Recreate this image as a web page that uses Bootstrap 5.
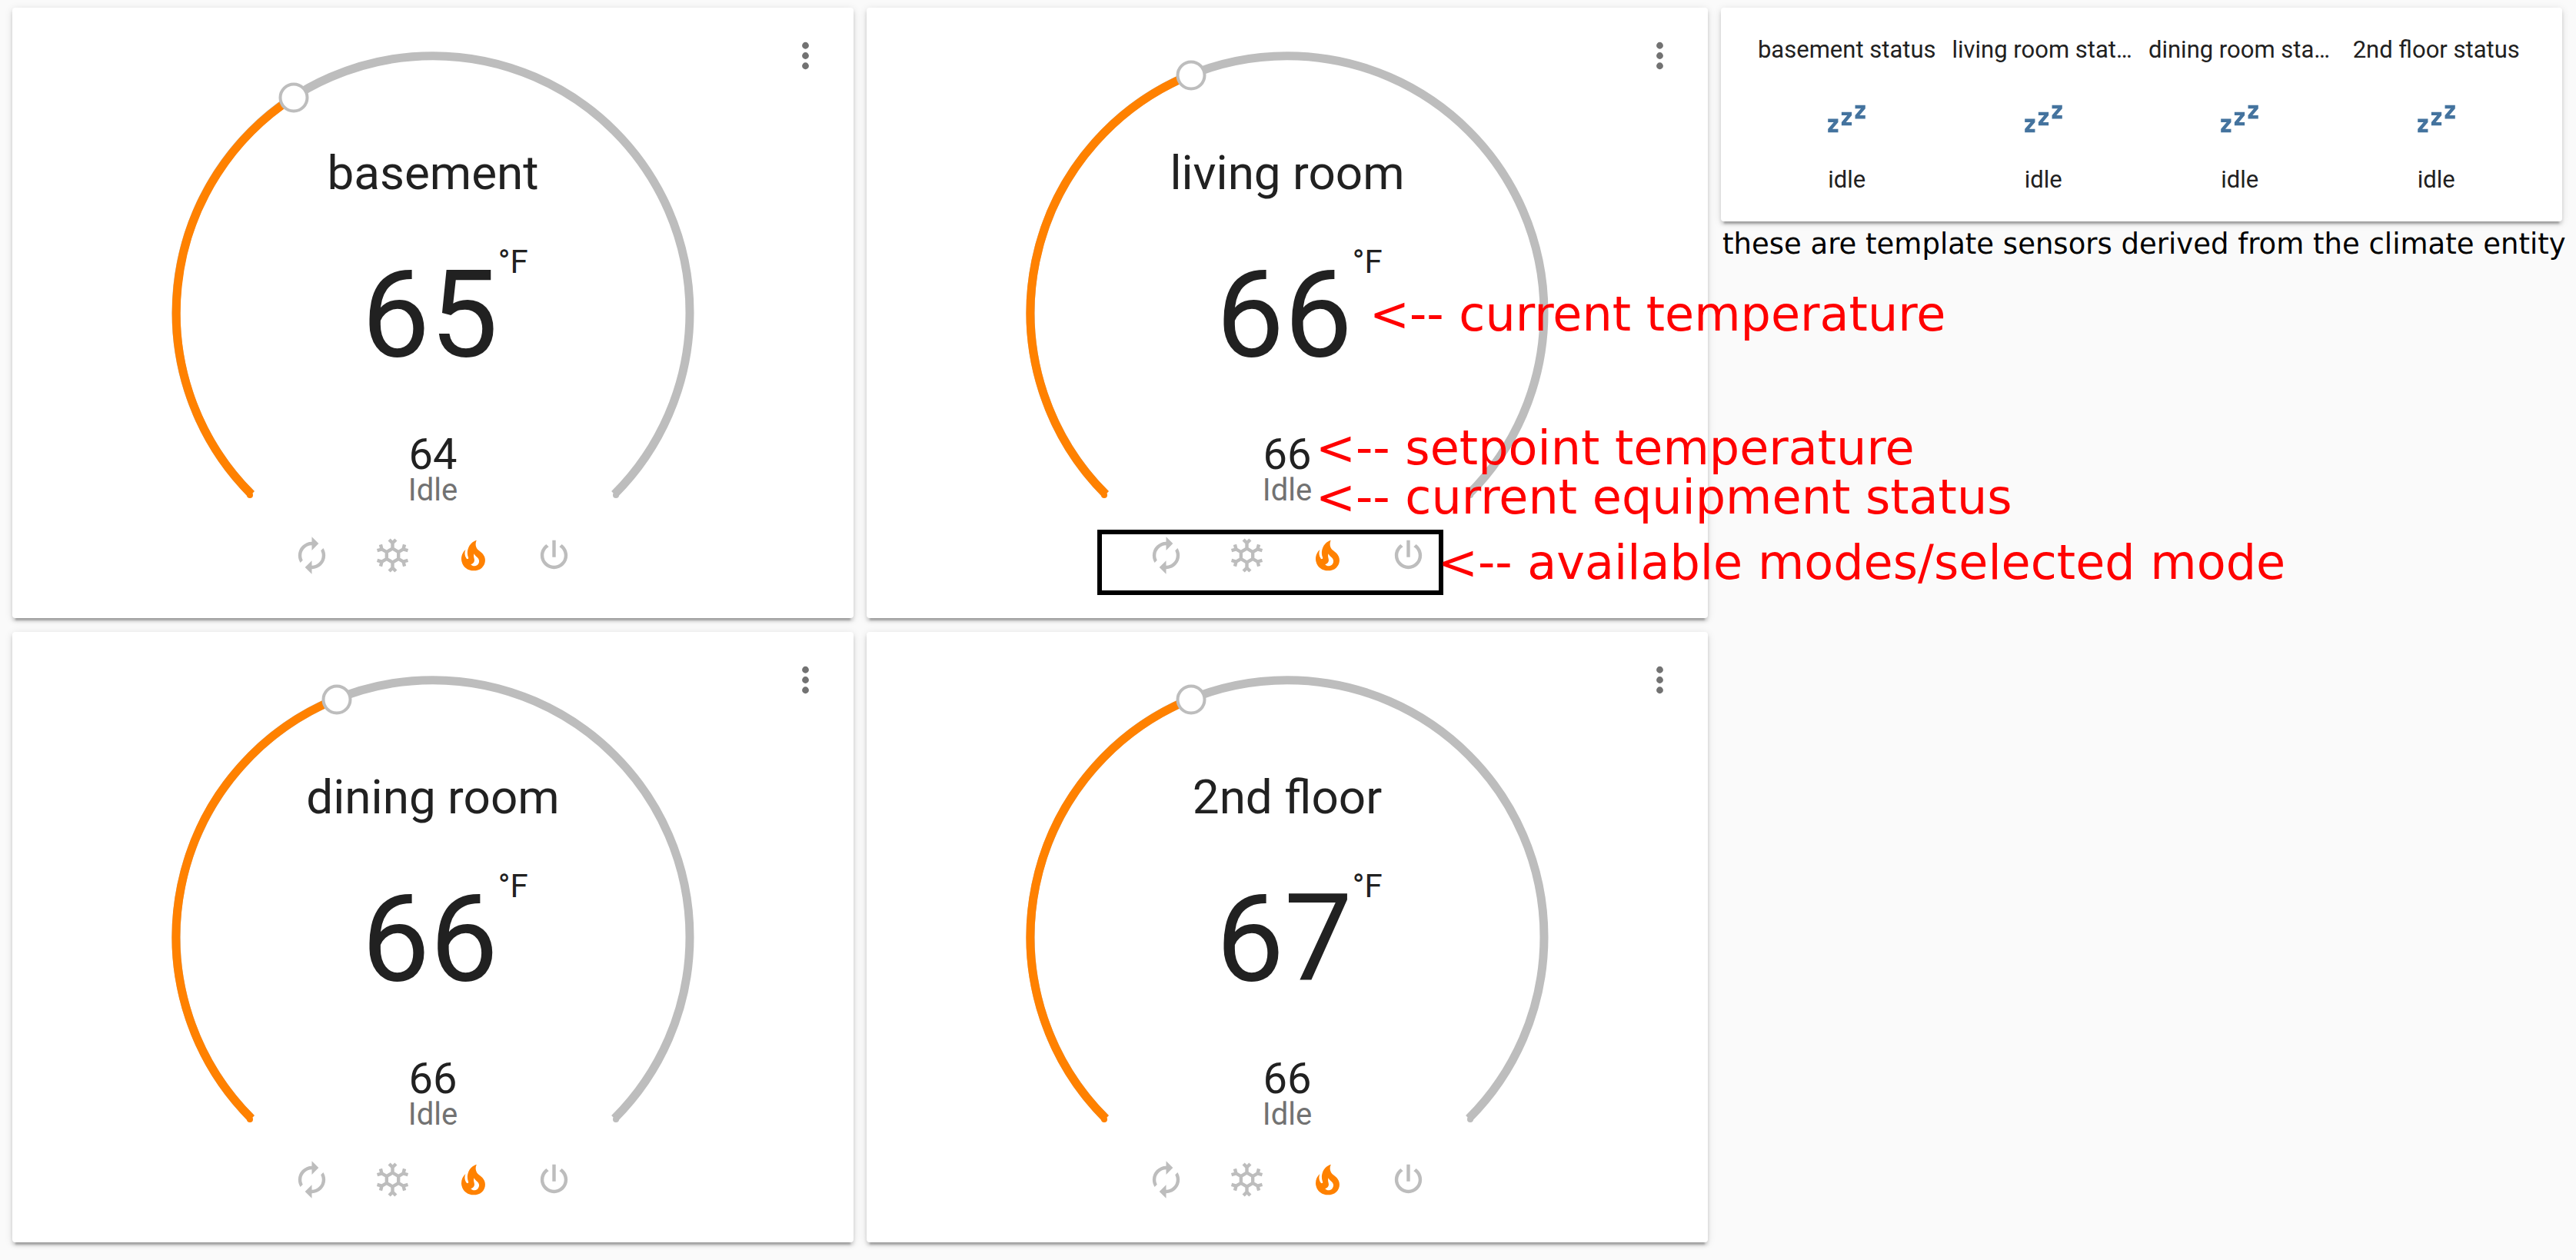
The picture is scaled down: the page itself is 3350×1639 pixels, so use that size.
<!DOCTYPE html>
<html lang="en">
<head>
<meta charset="utf-8">
<meta name="viewport" content="width=device-width, initial-scale=1">
<title>Thermostats</title>
<link href="https://cdn.jsdelivr.net/npm/bootstrap@5.3.0/dist/css/bootstrap.min.css" rel="stylesheet">
<style>
  body { background: #fafafa; color: #212121; font-family: Roboto, sans-serif; overflow-x: hidden; }
  .dashboard { padding: 10px 18px 10px 16px; }
  .dashboard > .row { --bs-gutter-x: 17px; }
  .stack { gap: 18px; }
  .panel { border: 0; border-radius: 4px; color: inherit; box-shadow: 0 4px 4px rgba(0,0,0,.14), 0 2px 11px rgba(0,0,0,.12), 0 7px 2px -4px rgba(0,0,0,.2); }
  .thermostat { padding: 57px 0 55px; }
  .icon { width: 53px; height: 53px; fill: currentColor; display: block; }
  .icon-btn { border: 0; padding: 0; background: none; color: #bdbdbd; }
  .icon-btn.heat { color: #ff8100; }
  .menu-btn { position: absolute; top: 36px; right: 36px; color: #727272; }
  .dial { display: grid; justify-content: center; grid-template-columns: 680px; }
  .dial > * { grid-area: 1 / 1; }
  .dial svg { width: 680px; height: 590px; overflow: visible; fill: none; stroke-width: 11px; }
  .track { stroke: #bdbdbd; }
  .level { stroke: #ff8100; }
  .track-tip { fill: #bdbdbd; }
  .level-tip { fill: #ff8100; }
  .knob { fill: #fff; stroke: #bdbdbd; stroke-width: 4px; }
  .readout { padding-top: 122px; }
  .room { font-size: 62px; line-height: 72px; font-weight: 400; margin-bottom: 56px; }
  .current { font-size: 158px; line-height: 184px; margin-bottom: 66px; padding-right: 8px; }
  .unit { position: absolute; left: 100%; top: 3px; margin-left: -8px; font-size: 42px; line-height: 42px; }
  .setpoint { font-size: 56px; line-height: 48px; }
  .action { font-size: 40px; line-height: 46px; color: #727272; }
  .modes { gap: 52px; margin-top: 35px; }
  .glance { padding: 37px 36px 36px; font-size: 31px; line-height: 36px; }
  .glance .col { padding: 0 9px; min-width: 0; }
  .glance .icon { color: #44739e; margin: 45px auto 35px; }
  .caption, .note { font-family: "DejaVu Sans", sans-serif; white-space: nowrap; }
  .caption { color: #000; font-size: 37px; line-height: 44px; margin: -10px 0 0 2px; }
  .note { position: absolute; z-index: 2; color: #f00; font-size: 62px; line-height: 72px; }
  .note-current { left: calc(50% + 107px); top: 363px; }
  .note-setpoint { left: calc(50% + 37px); top: 537px; }
  .note-action { left: calc(50% + 37px); top: 601px; }
  .note-modes { left: calc(50% + 196px); top: 686px; }
  .frame { position: absolute; left: calc(50% - 247px); top: 679px; width: 450px; height: 85px; border: 6px solid #000; pointer-events: none; }
</style>
</head>
<body>
<svg class="d-none" aria-hidden="true">
  <symbol id="i-dots" viewBox="0 0 24 24"><path d="M12,16A2,2 0 0,1 14,18A2,2 0 0,1 12,20A2,2 0 0,1 10,18A2,2 0 0,1 12,16M12,10A2,2 0 0,1 14,12A2,2 0 0,1 12,14A2,2 0 0,1 10,12A2,2 0 0,1 12,10M12,4A2,2 0 0,1 14,6A2,2 0 0,1 12,8A2,2 0 0,1 10,6A2,2 0 0,1 12,4Z"/></symbol>
  <symbol id="i-auto" viewBox="0 0 24 24"><path d="M12,6V9L16,5L12,1V4A8,8 0 0,0 4,12C4,13.57 4.46,15.03 5.24,16.26L6.7,14.8C6.25,13.97 6,13 6,12A6,6 0 0,1 12,6M18.76,7.74L17.3,9.2C17.74,10.04 18,11 18,12A6,6 0 0,1 12,18V15L8,19L12,23V20A8,8 0 0,0 20,12C20,10.43 19.54,8.97 18.76,7.74Z"/></symbol>
  <symbol id="i-cool" viewBox="0 0 24 24"><path d="M20.79,13.95L18.46,14.57L16.46,13.44V10.56L18.46,9.43L20.79,10.05L21.31,8.12L19.54,7.65L20,5.88L18.07,5.36L17.45,7.69L15.45,8.82L13,7.38V5.12L14.71,3.41L13.29,2L12,3.29L10.71,2L9.29,3.41L11,5.12V7.38L8.5,8.82L6.5,7.69L5.92,5.36L4,5.88L4.47,7.65L2.7,8.12L3.22,10.05L5.55,9.43L7.55,10.56V13.45L5.55,14.58L3.22,13.96L2.7,15.89L4.47,16.36L4,18.12L5.93,18.64L6.55,16.31L8.55,15.18L11,16.62V18.88L9.29,20.59L10.71,22L12,20.71L13.29,22L14.7,20.59L13,18.88V16.62L15.5,15.17L17.5,16.3L18.12,18.63L20,18.12L19.53,16.35L21.3,15.88L20.79,13.95M9.5,10.56L12,9.11L14.5,10.56V13.44L12,14.89L9.5,13.44V10.56Z"/></symbol>
  <symbol id="i-heat" viewBox="0 0 24 24"><path d="M17.66 11.2C17.43 10.9 17.15 10.64 16.89 10.38C16.22 9.78 15.46 9.35 14.82 8.72C13.33 7.26 13 4.85 13.95 3C13 3.23 12.17 3.75 11.46 4.32C8.87 6.4 7.85 10.07 9.07 13.22C9.11 13.32 9.15 13.42 9.15 13.55C9.15 13.77 9 13.97 8.8 14.05C8.57 14.15 8.33 14.09 8.14 13.93C8.08 13.88 8.04 13.83 8 13.76C6.87 12.33 6.69 10.28 7.45 8.64C5.78 10 4.87 12.3 5 14.47C5.06 14.97 5.12 15.47 5.29 15.97C5.43 16.57 5.7 17.17 6 17.7C7.08 19.43 8.95 20.67 10.96 20.92C13.1 21.19 15.39 20.8 17.03 19.32C18.86 17.66 19.5 15 18.56 12.72L18.43 12.46C18.22 12 17.66 11.2 17.66 11.2M14.5 17.5C14.22 17.74 13.76 18 13.4 18.1C12.28 18.5 11.16 17.94 10.5 17.28C11.69 17 12.4 16.12 12.61 15.23C12.78 14.43 12.46 13.77 12.33 13C12.21 12.26 12.23 11.63 12.5 10.94C12.69 11.32 12.89 11.7 13.13 12C13.9 13 15.11 13.44 15.37 14.8C15.41 14.94 15.43 15.08 15.43 15.23C15.46 16.05 15.1 16.95 14.5 17.5Z"/></symbol>
  <symbol id="i-off" viewBox="0 0 24 24"><path d="M16.56,5.44L15.11,6.89C16.84,7.94 18,9.83 18,12A6,6 0 0,1 12,18A6,6 0 0,1 6,12C6,9.83 7.16,7.94 8.88,6.88L7.44,5.44C5.36,6.88 4,9.28 4,12A8,8 0 0,0 12,20A8,8 0 0,0 20,12C20,9.28 18.64,6.88 16.56,5.44M13,3H11V13H13V3"/></symbol>
  <symbol id="i-sleep" viewBox="0 0 24 24"><path d="M23,12H17V10L20.39,6H17V4H23V6L19.62,10H23V12M15,16H9V14L12.39,10H9V8H15V10L11.62,14H15V16M7,20H1V18L4.39,14H1V12H7V14L3.62,18H7V20Z"/></symbol>
</svg>

<main class="dashboard container-fluid">
  <div class="row row-cols-3">
    <div class="col d-flex flex-column stack">
      <section class="card panel thermostat">
        <button type="button" class="icon-btn menu-btn" aria-label="More options"><svg class="icon"><use href="#i-dots"/></svg></button>
        <div class="dial">
          <svg viewBox="0 0 680 590" aria-hidden="true">
            <path class="track" d="M104 576A334 334 0 1 1 576 576"/>
            <circle class="track-tip" stroke="none" cx="578" cy="577" r="4"/>
            <path class="level" d="M104 576A334 334 0 0 1 158 60"/>
            <circle class="level-tip" stroke="none" cx="102" cy="577" r="4"/>
            <circle class="knob" cx="159" cy="60" r="17.5"/>
          </svg>
          <div class="readout d-flex flex-column align-items-center">
            <h2 class="room">basement</h2>
            <div class="current position-relative">65<span class="unit">°F</span></div>
            <div class="setpoint">64</div>
            <div class="action">Idle</div>
          </div>
        </div>
        <div class="modes d-flex justify-content-center">
          <button type="button" class="icon-btn" aria-label="Auto"><svg class="icon"><use href="#i-auto"/></svg></button>
          <button type="button" class="icon-btn" aria-label="Cool"><svg class="icon"><use href="#i-cool"/></svg></button>
          <button type="button" class="icon-btn heat" aria-label="Heat" aria-pressed="true"><svg class="icon"><use href="#i-heat"/></svg></button>
          <button type="button" class="icon-btn" aria-label="Off"><svg class="icon"><use href="#i-off"/></svg></button>
        </div>
      </section>

      <section class="card panel thermostat">
        <button type="button" class="icon-btn menu-btn" aria-label="More options"><svg class="icon"><use href="#i-dots"/></svg></button>
        <div class="dial">
          <svg viewBox="0 0 680 590" aria-hidden="true">
            <path class="track" d="M104 576A334 334 0 1 1 576 576"/>
            <circle class="track-tip" stroke="none" cx="578" cy="577" r="4"/>
            <path class="level" d="M104 576A334 334 0 0 1 215 30"/>
            <circle class="level-tip" stroke="none" cx="102" cy="577" r="4"/>
            <circle class="knob" cx="215" cy="31" r="17.5"/>
          </svg>
          <div class="readout d-flex flex-column align-items-center">
            <h2 class="room">dining room</h2>
            <div class="current position-relative">66<span class="unit">°F</span></div>
            <div class="setpoint">66</div>
            <div class="action">Idle</div>
          </div>
        </div>
        <div class="modes d-flex justify-content-center">
          <button type="button" class="icon-btn" aria-label="Auto"><svg class="icon"><use href="#i-auto"/></svg></button>
          <button type="button" class="icon-btn" aria-label="Cool"><svg class="icon"><use href="#i-cool"/></svg></button>
          <button type="button" class="icon-btn heat" aria-label="Heat" aria-pressed="true"><svg class="icon"><use href="#i-heat"/></svg></button>
          <button type="button" class="icon-btn" aria-label="Off"><svg class="icon"><use href="#i-off"/></svg></button>
        </div>
      </section>
    </div>

    <div class="col d-flex flex-column stack">
      <section class="card panel thermostat">
        <button type="button" class="icon-btn menu-btn" aria-label="More options"><svg class="icon"><use href="#i-dots"/></svg></button>
        <div class="dial">
          <svg viewBox="0 0 680 590" aria-hidden="true">
            <path class="track" d="M104 576A334 334 0 1 1 576 576"/>
            <circle class="track-tip" stroke="none" cx="578" cy="577" r="4"/>
            <path class="level" d="M104 576A334 334 0 0 1 215 30"/>
            <circle class="level-tip" stroke="none" cx="102" cy="577" r="4"/>
            <circle class="knob" cx="215" cy="31" r="17.5"/>
          </svg>
          <div class="readout d-flex flex-column align-items-center">
            <h2 class="room">living room</h2>
            <div class="current position-relative">66<span class="unit">°F</span></div>
            <div class="setpoint">66</div>
            <div class="action">Idle</div>
          </div>
        </div>
        <div class="modes d-flex justify-content-center">
          <button type="button" class="icon-btn" aria-label="Auto"><svg class="icon"><use href="#i-auto"/></svg></button>
          <button type="button" class="icon-btn" aria-label="Cool"><svg class="icon"><use href="#i-cool"/></svg></button>
          <button type="button" class="icon-btn heat" aria-label="Heat" aria-pressed="true"><svg class="icon"><use href="#i-heat"/></svg></button>
          <button type="button" class="icon-btn" aria-label="Off"><svg class="icon"><use href="#i-off"/></svg></button>
        </div>
        <div class="frame"></div>
        <div class="note note-current">&lt;-- current temperature</div>
        <div class="note note-setpoint">&lt;-- setpoint temperature</div>
        <div class="note note-action">&lt;-- current equipment status</div>
        <div class="note note-modes">&lt;-- available modes/selected mode</div>
      </section>

      <section class="card panel thermostat">
        <button type="button" class="icon-btn menu-btn" aria-label="More options"><svg class="icon"><use href="#i-dots"/></svg></button>
        <div class="dial">
          <svg viewBox="0 0 680 590" aria-hidden="true">
            <path class="track" d="M104 576A334 334 0 1 1 576 576"/>
            <circle class="track-tip" stroke="none" cx="578" cy="577" r="4"/>
            <path class="level" d="M104 576A334 334 0 0 1 215 30"/>
            <circle class="level-tip" stroke="none" cx="102" cy="577" r="4"/>
            <circle class="knob" cx="215" cy="31" r="17.5"/>
          </svg>
          <div class="readout d-flex flex-column align-items-center">
            <h2 class="room">2nd floor</h2>
            <div class="current position-relative">67<span class="unit">°F</span></div>
            <div class="setpoint">66</div>
            <div class="action">Idle</div>
          </div>
        </div>
        <div class="modes d-flex justify-content-center">
          <button type="button" class="icon-btn" aria-label="Auto"><svg class="icon"><use href="#i-auto"/></svg></button>
          <button type="button" class="icon-btn" aria-label="Cool"><svg class="icon"><use href="#i-cool"/></svg></button>
          <button type="button" class="icon-btn heat" aria-label="Heat" aria-pressed="true"><svg class="icon"><use href="#i-heat"/></svg></button>
          <button type="button" class="icon-btn" aria-label="Off"><svg class="icon"><use href="#i-off"/></svg></button>
        </div>
      </section>
    </div>

    <div class="col d-flex flex-column stack">
      <section class="card panel glance">
        <div class="row gx-0 text-center">
          <div class="col"><div class="text-truncate">basement status</div><svg class="icon"><use href="#i-sleep"/></svg><div>idle</div></div>
          <div class="col"><div class="text-truncate">living room status</div><svg class="icon"><use href="#i-sleep"/></svg><div>idle</div></div>
          <div class="col"><div class="text-truncate">dining room status</div><svg class="icon"><use href="#i-sleep"/></svg><div>idle</div></div>
          <div class="col"><div class="text-truncate">2nd floor status</div><svg class="icon"><use href="#i-sleep"/></svg><div>idle</div></div>
        </div>
      </section>
      <p class="caption">these are template sensors derived from the climate entity</p>
    </div>
  </div>
</main>
<script src="https://cdn.jsdelivr.net/npm/bootstrap@5.3.0/dist/js/bootstrap.bundle.min.js"></script>
</body>
</html>
